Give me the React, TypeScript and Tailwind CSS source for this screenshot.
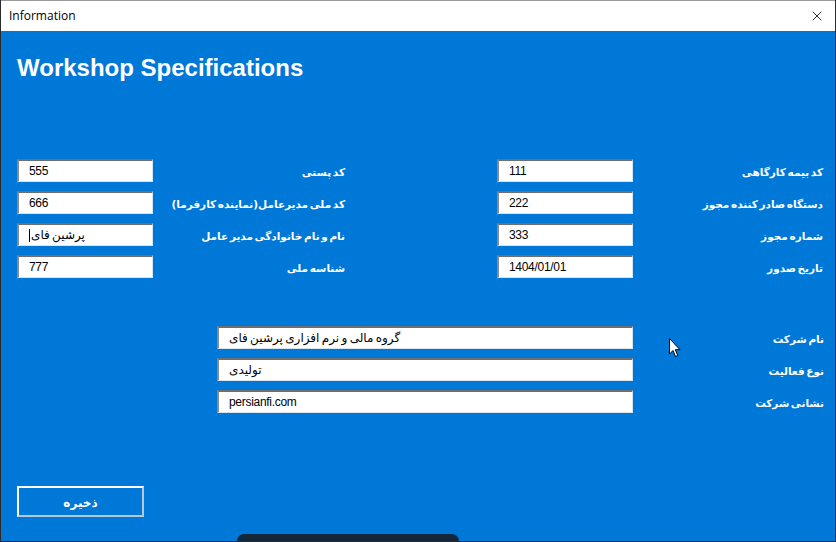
import { X } from "lucide-react";

const persian = "font-['DejaVu_Sans',sans-serif]";

type Field = { label: string; value: string };

const leftFields: Field[] = [
  { label: "کد پستی", value: "555" },
  { label: "کد ملی مدیرعامل(نماینده کارفرما)", value: "666" },
  { label: "نام و نام خانوادگی مدیر عامل", value: "پرشین فای" },
  { label: "شناسه ملی", value: "777" },
];

const rightFields: Field[] = [
  { label: "کد بیمه کارگاهی", value: "111" },
  { label: "دستگاه صادر کننده مجوز", value: "222" },
  { label: "شماره مجوز", value: "333" },
  { label: "تاریخ صدور", value: "1404/01/01" },
];

const companyFields: Field[] = [
  { label: "نام شرکت", value: "گروه مالی و نرم افزاری پرشین فای" },
  { label: "نوع فعالیت", value: "تولیدی" },
  { label: "نشانی شرکت", value: "persianfi.com" },
];

function TextBox({ value, caret }: { value: string; caret?: boolean }) {
  return (
    <div className="flex h-[23px] items-center border-t-2 border-l-2 border-b border-r border-t-[#6f6f6f] border-l-[#8a8a8a] border-b-[#d8e4ee] border-r-[#d8e4ee] bg-white pl-[10px]">
      {caret && <span className="mr-px h-[13px] w-px bg-black" />}
      <span className="font-['Liberation_Sans','DejaVu_Sans',sans-serif] text-[12px] leading-none tracking-[-0.3px] text-black [word-spacing:-1px]">
        {value}
      </span>
    </div>
  );
}

function Label({ text }: { text: string }) {
  return (
    <div
      dir="rtl"
      className={`flex h-[23px] items-center pt-[4px] text-right text-[10.5px] font-bold tracking-[-0.6px] text-white [word-spacing:-2px] ${persian}`}
    >
      {text}
    </div>
  );
}

export default function App() {
  return (
    <div className="flex h-[542px] w-[836px] flex-col overflow-hidden border-x border-b border-[#2b2b2b] bg-[#0078d7]">
      <div className="flex h-[31px] shrink-0 items-center justify-between border-t border-[#9a9a9a] bg-white pl-[8px] pr-[10px]">
        <span className="font-['Open_Sans',sans-serif] text-[12px] text-black">Information</span>
        <X className="h-[16px] w-[16px] text-black" strokeWidth={1.2} />
      </div>

      <div className="relative flex flex-1 flex-col px-[16px]">
        <h1 className="mt-[23px] font-['Liberation_Sans',sans-serif] text-[24px] font-bold leading-[28px] text-white">
          Workshop Specifications
        </h1>

        <div className="mt-[77px] grid grid-cols-[136px_192px_152px_136px_190px] gap-y-[9px]">
          {leftFields.map((f, i) => (
            <div key={f.label} className="contents">
              <TextBox value={f.value} caret={i === 2} />
              <div className="flex justify-end">
                <Label text={f.label} />
              </div>
              <div />
              <TextBox value={rightFields[i].value} />
              <div className="flex justify-end">
                <Label text={rightFields[i].label} />
              </div>
            </div>
          ))}
        </div>

        <div className="mt-[48px] grid grid-cols-[200px_416px_191px] gap-y-[9px]">
          {companyFields.map((f) => (
            <div key={f.label} className="contents">
              <div />
              <TextBox value={f.value} />
              <div className="flex justify-end">
                <Label text={f.label} />
              </div>
            </div>
          ))}
        </div>

        <button
          type="button"
          className={`mt-[73px] flex h-[31px] w-[127px] items-center justify-center border-t-2 border-l-2 border-b-2 border-r-2 border-t-white border-l-white border-b-[#b8c8d8] border-r-[#b8c8d8] bg-[#0078d7] pt-[2px] text-[12px] font-bold text-white ${persian}`}
        >
          ذخیره
        </button>

        <svg
          className="absolute left-[668px] top-[307px]"
          width="12"
          height="20"
          viewBox="0 0 12 20"
        >
          <path d="M0.5 0.5 L0.5 16 L4 12.5 L6.5 18.5 L8.8 17.5 L6.3 11.7 L11 11.7 Z" fill="white" stroke="black" strokeWidth="1" />
        </svg>

        <div className="absolute bottom-0 left-[236px] h-[7px] w-[222px] rounded-t-[10px] bg-[#13273a]" />
      </div>
    </div>
  );
}
